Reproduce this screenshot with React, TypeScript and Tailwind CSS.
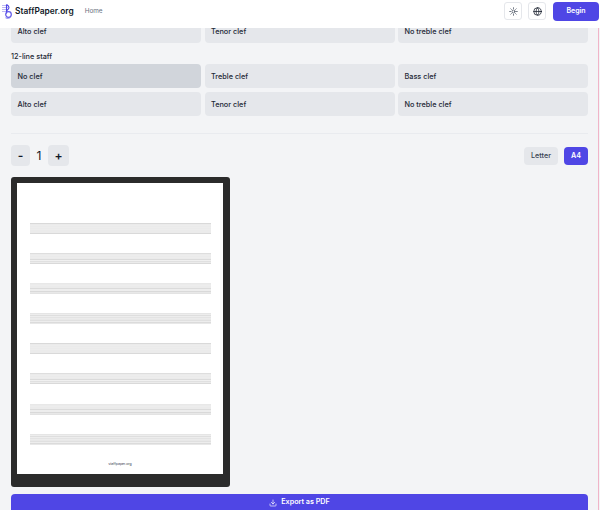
import React from "react";
import { Sun, Globe, Download } from "lucide-react";

const font = "font-['Inter','Liberation_Sans',sans-serif]";

function Clef({ label, active }: { label: string; active?: boolean }) {
  return (
    <button className={`h-6 rounded-[4px] pl-[6.5px] pt-[2px] text-left text-[7.3px] font-medium text-[#1f2937] ${active ? "bg-[#d1d5db]" : "bg-[#e5e7eb]"}`}>
      {label}
    </button>
  );
}

function Logo() {
  return (
    <svg width="11" height="15" viewBox="0 0 11 15" fill="none" className="shrink-0">
      <g stroke="#b5b0f2" strokeWidth="0.9">
        <path d="M0 1.5h6M0 3.5h6M0 5.5h6M0 7.5h6" />
      </g>
      <path d="M4.5 0.5 V9.5 M4.5 0.5c1.5 1 2.5 1.5 2.5 3S5.5 6 4.5 7" stroke="#4f46e5" strokeWidth="1.1" />
      <circle cx="6.5" cy="10.5" r="2.8" stroke="#5f57e8" strokeWidth="1.2" />
      <path d="M3.5 13.8c2 .8 4 .4 5-.5" stroke="#7c75ec" strokeWidth="1" />
    </svg>
  );
}

const patterns = [
  [0.15, 0.08, 0.07, 0.08, 0.07, 0.08, 0.07, 0.08, 0.08, 0.08, 0.15],
  [0.13, 0.08, 0.07, 0.08, 0.07, 0.08, 0.14, 0.06, 0.12, 0.08, 0.15],
  [0.09, 0.08, 0.07, 0.08, 0.08, 0.14, 0.07, 0.07, 0.15, 0.09, 0.11],
  [0.1, 0.07, 0.13, 0.07, 0.11, 0.08, 0.09, 0.12, 0.07, 0.14, 0.09],
];

function Staff({ index }: { index: number }) {
  const rows = patterns[index % patterns.length];
  return (
    <svg viewBox="0 0 181 11" width="181" height="11" className="block" shapeRendering="crispEdges">
      {rows.map((o, i) => (
        <rect key={i} x="0" y={i} width="181" height="1" fill="#000" fillOpacity={o} />
      ))}
    </svg>
  );
}

export default function App() {
  const row1 = ["No clef", "Treble clef", "Bass clef"];
  const row2 = ["Alto clef", "Tenor clef", "No treble clef"];
  return (
    <div className={`flex h-[510px] w-[600px] flex-col overflow-hidden bg-[#f3f4f6] ${font}`}>
      <header className="relative z-10 flex h-7 shrink-0 items-center bg-white pb-[6px] pl-[2px] pr-[1px]">
        <Logo />
        <span className="ml-[2px] text-[8.4px] font-semibold text-[#111827]">StaffPaper.org</span>
        <span className="ml-[11px] mt-[2px] text-[6.4px] text-[#6b7280]">Home</span>
        <div className="ml-auto flex items-center">
          <span className="flex h-[18px] w-[18px] items-center justify-center rounded-[3px] border border-[#e5e7eb] bg-white">
            <Sun size={9} color="#374151" />
          </span>
          <span className="ml-[6px] flex h-[18px] w-[18px] items-center justify-center rounded-[3px] border border-[#e5e7eb] bg-white">
            <Globe size={9} color="#111827" />
          </span>
          <span className="ml-[7px] flex h-[19px] w-[46px] items-center justify-center rounded-[4px] bg-[#4f46e5] text-[7px] font-semibold text-white">
            Begin
          </span>
        </div>
      </header>

      <main className="-mt-[9px] flex min-h-0 flex-1 flex-col pl-[11px] pr-[1px]">
        <div className="flex min-h-0 flex-1 flex-col border-r border-r-[#f0b4c8] pr-[10px]">
          <div className="grid shrink-0 grid-cols-3 gap-x-[3.5px]">
            {row2.map((l) => (
              <Clef key={l} label={l} />
            ))}
          </div>
          <div className="mt-[7px] h-[14px] shrink-0 text-[7.3px] font-medium leading-[14px] text-[#1f2937]">12-line staff</div>
          <div className="grid shrink-0 grid-cols-3 gap-x-[3.5px] gap-y-1">
            {row1.map((l, i) => (
              <Clef key={l} label={l} active={i === 0} />
            ))}
            {row2.map((l) => (
              <Clef key={l} label={l} />
            ))}
          </div>
          <div className="mt-[17px] h-px shrink-0 bg-[#e9ebef]" />
          <div className="mt-[11px] flex h-[21px] shrink-0 items-center">
            <button className="h-[21px] w-[19px] rounded-[4px] bg-[#e5e7eb] text-[12px] font-semibold text-[#111827]">-</button>
            <span className="w-[18px] text-center text-[12px] text-[#111827]">1</span>
            <button className="h-[21px] w-[21px] rounded-[4px] bg-[#e5e7eb] text-[12px] font-semibold text-[#111827]">+</button>
            <button className="ml-auto mt-[1px] h-[18px] w-[34px] rounded-[4px] bg-[#e5e7eb] text-[7.2px] font-medium text-[#374151]">Letter</button>
            <button className="ml-[6px] mt-[1px] h-[18px] w-[24px] rounded-[4px] bg-[#4f46e5] text-[7.2px] font-semibold text-white">A4</button>
          </div>
          <div className="mt-[11px] h-[310px] w-[219px] shrink-0 rounded-[3px] bg-[#2b2b2b] p-[6px]">
            <div className="flex h-[291px] w-[206px] flex-col items-center bg-white pt-[40px]">
              <div className="flex flex-col gap-[19.1px]">
                {Array.from({ length: 8 }).map((_, i) => (
                  <Staff key={i} index={i} />
                ))}
              </div>
              <div className="mt-[18px] text-[3.5px] leading-none text-[#374151]">staffpaper.org</div>
            </div>
          </div>
          <button className="mt-[7px] flex h-6 shrink-0 items-center justify-center gap-[4px] rounded-[4px] bg-[#4f46e5] pb-[7px] text-[7.2px] font-semibold text-white">
            <Download size={8} />
            Export as PDF
          </button>
        </div>
      </main>
    </div>
  );
}
